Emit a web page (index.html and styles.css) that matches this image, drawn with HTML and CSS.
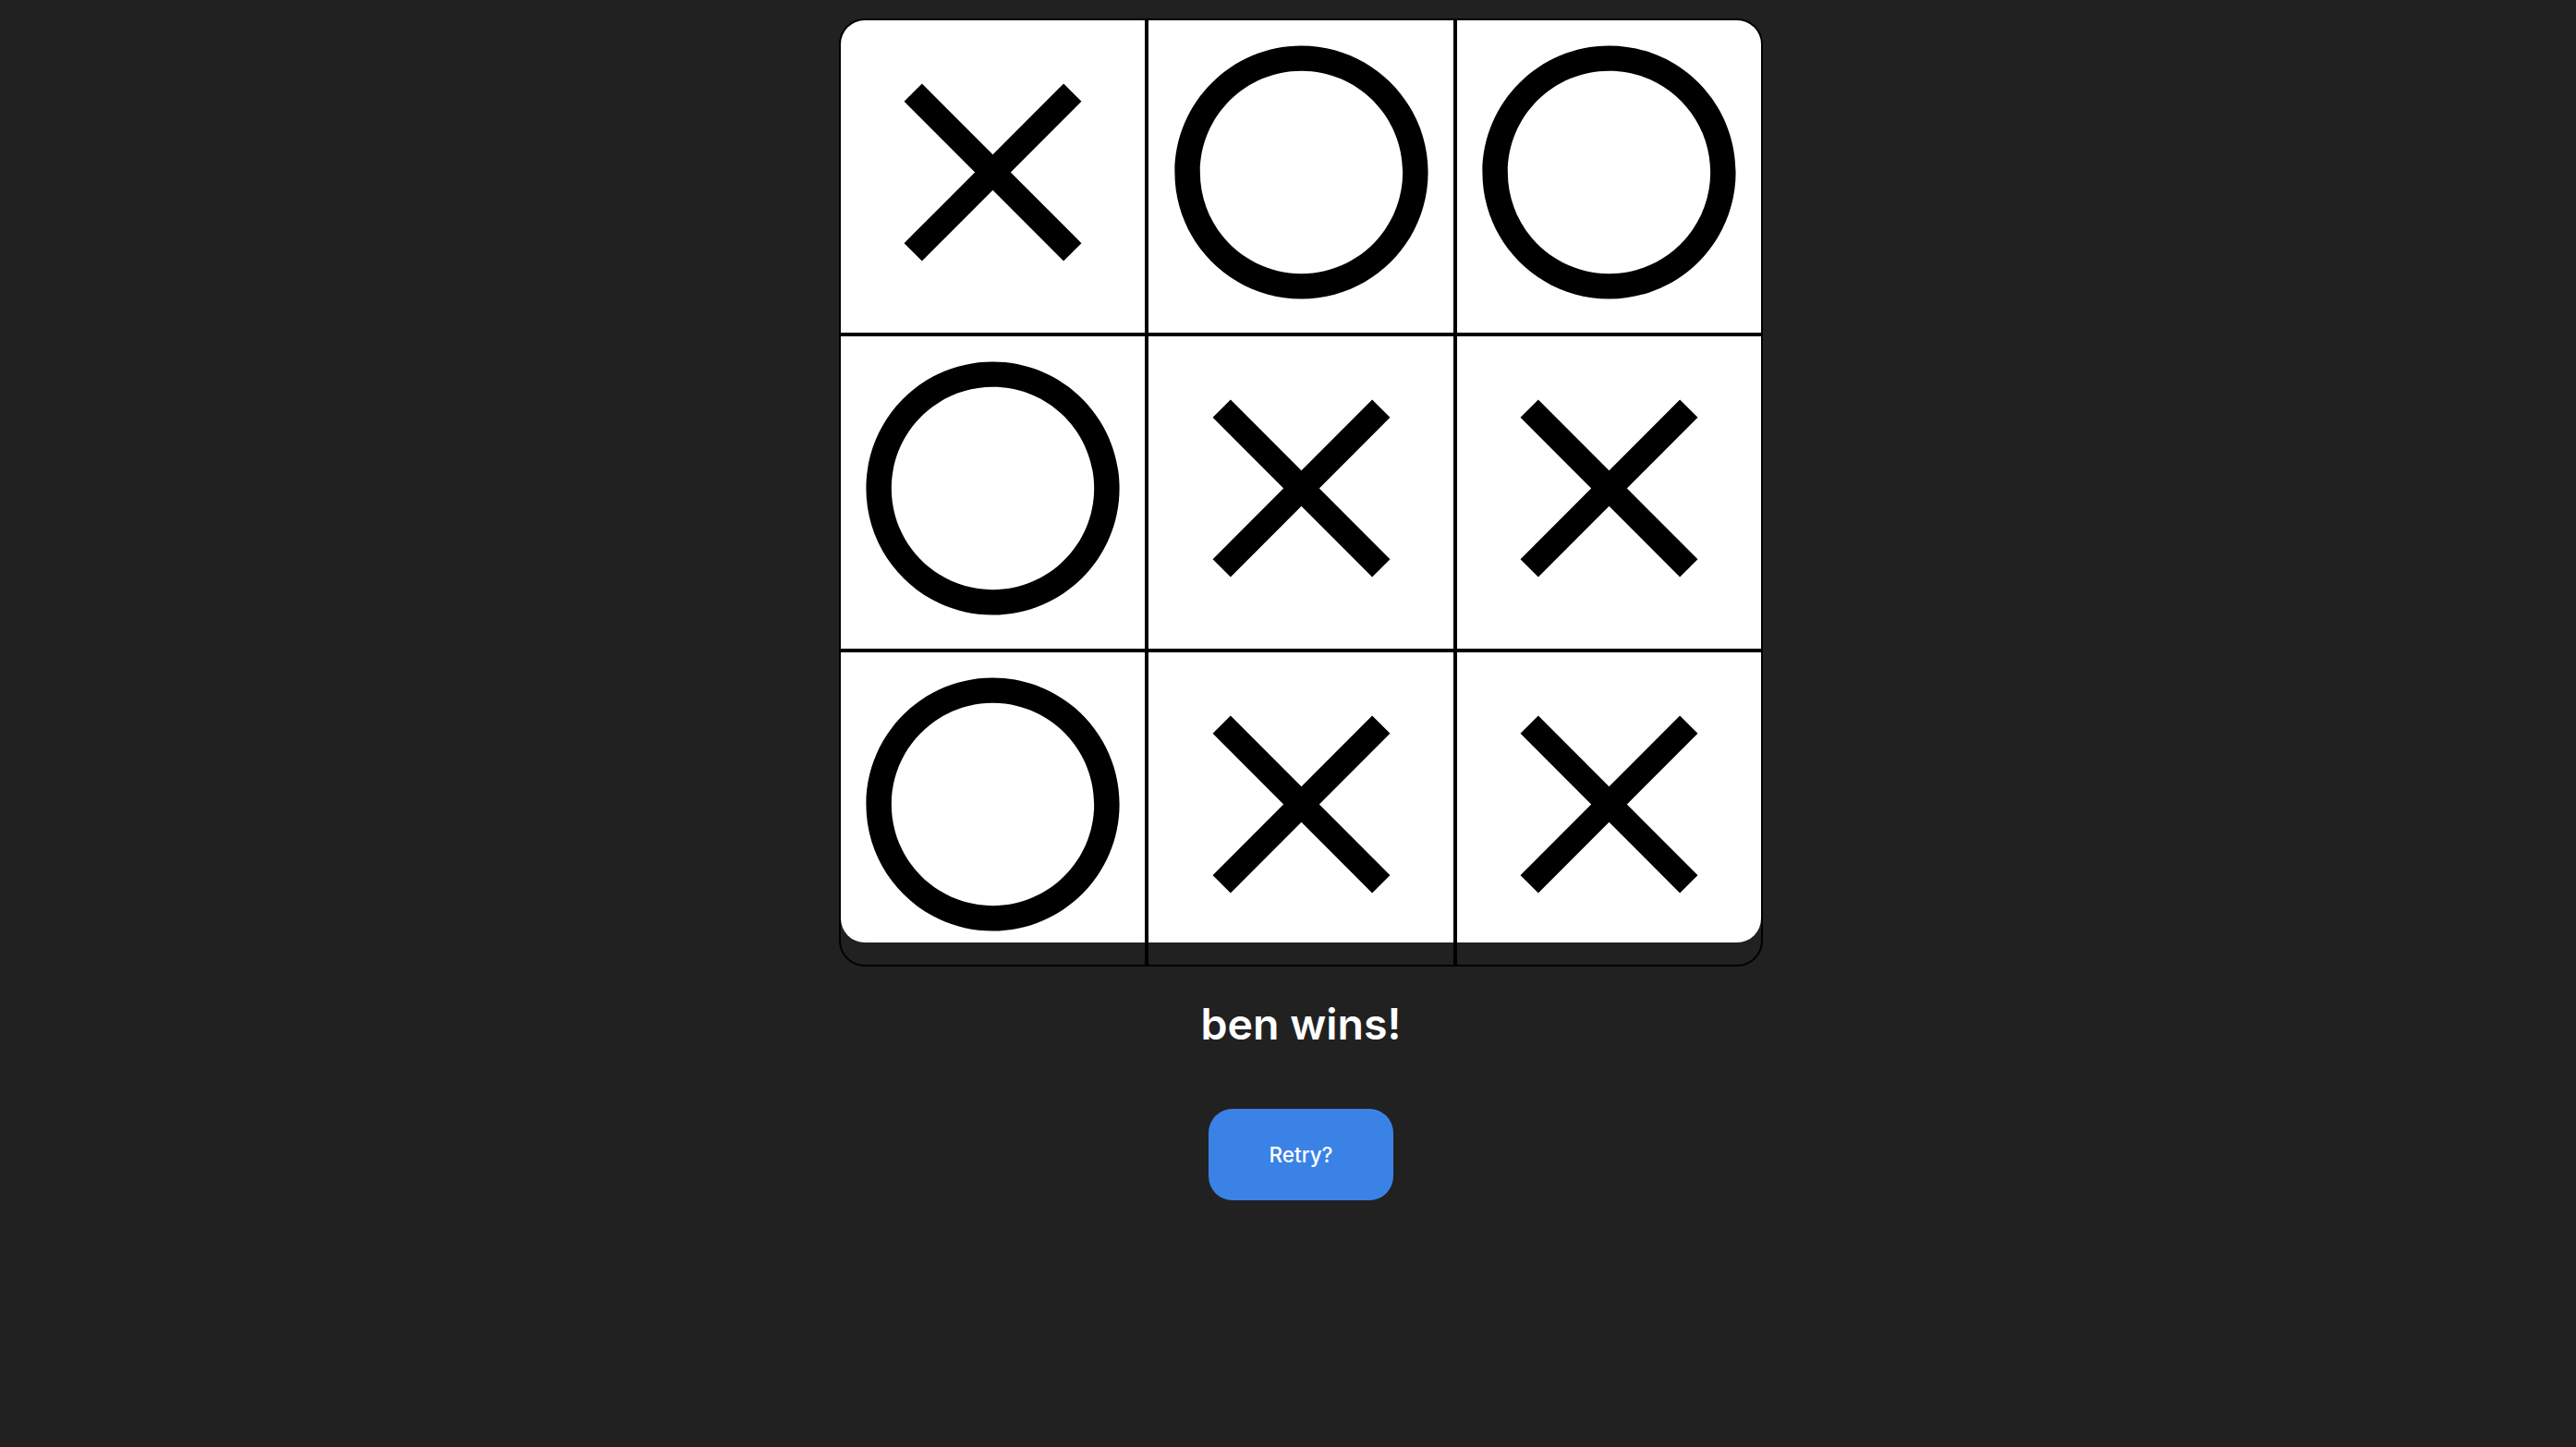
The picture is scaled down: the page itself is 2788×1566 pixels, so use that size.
FILE: index.html
```html
<!DOCTYPE html>
<html lang="en">
<head>
<meta charset="utf-8">
<title>Tic Tac Toe</title>
<link rel="stylesheet" href="styles.css">
</head>
<body>
<main class="page">
  <div class="board">
    <div class="cell c1 r1"><svg class="mark" viewBox="0 0 24 24"><path d="M19 6.41L17.59 5 12 10.59 6.41 5 5 6.41 10.59 12 5 17.59 6.41 19 12 13.41 17.59 19 19 17.59 13.41 12z"/></svg></div>
    <div class="cell c2 r1"><svg class="mark" viewBox="0 0 24 24"><path d="M12 2C6.48 2 2 6.48 2 12s4.48 10 10 10 10-4.48 10-10S17.52 2 12 2zm0 18c-4.42 0-8-3.58-8-8s3.58-8 8-8 8 3.58 8 8-3.58 8-8 8z"/></svg></div>
    <div class="cell c3 r1"><svg class="mark" viewBox="0 0 24 24"><path d="M12 2C6.48 2 2 6.48 2 12s4.48 10 10 10 10-4.48 10-10S17.52 2 12 2zm0 18c-4.42 0-8-3.58-8-8s3.58-8 8-8 8 3.58 8 8-3.58 8-8 8z"/></svg></div>
    <div class="cell c1 r2"><svg class="mark" viewBox="0 0 24 24"><path d="M12 2C6.48 2 2 6.48 2 12s4.48 10 10 10 10-4.48 10-10S17.52 2 12 2zm0 18c-4.42 0-8-3.58-8-8s3.58-8 8-8 8 3.58 8 8-3.58 8-8 8z"/></svg></div>
    <div class="cell c2 r2"><svg class="mark" viewBox="0 0 24 24"><path d="M19 6.41L17.59 5 12 10.59 6.41 5 5 6.41 10.59 12 5 17.59 6.41 19 12 13.41 17.59 19 19 17.59 13.41 12z"/></svg></div>
    <div class="cell c3 r2"><svg class="mark" viewBox="0 0 24 24"><path d="M19 6.41L17.59 5 12 10.59 6.41 5 5 6.41 10.59 12 5 17.59 6.41 19 12 13.41 17.59 19 19 17.59 13.41 12z"/></svg></div>
    <div class="cell c1 r3"><svg class="mark" viewBox="0 0 24 24"><path d="M12 2C6.48 2 2 6.48 2 12s4.48 10 10 10 10-4.48 10-10S17.52 2 12 2zm0 18c-4.42 0-8-3.58-8-8s3.58-8 8-8 8 3.58 8 8-3.58 8-8 8z"/></svg></div>
    <div class="cell c2 r3"><svg class="mark" viewBox="0 0 24 24"><path d="M19 6.41L17.59 5 12 10.59 6.41 5 5 6.41 10.59 12 5 17.59 6.41 19 12 13.41 17.59 19 19 17.59 13.41 12z"/></svg></div>
    <div class="cell c3 r3"><svg class="mark" viewBox="0 0 24 24"><path d="M19 6.41L17.59 5 12 10.59 6.41 5 5 6.41 10.59 12 5 17.59 6.41 19 12 13.41 17.59 19 19 17.59 13.41 12z"/></svg></div>
  </div>
  <h1 class="result">ben wins!</h1>
  <button class="retry" type="button">Retry?</button>
</main>
</body>
</html>
```

FILE: styles.css
```css
html, body {
  margin: 0;
  padding: 0;
  background: #212121;
}

body {
  font-family: Inter, "Liberation Sans", sans-serif;
  min-height: 1566px;
}

.page {
  display: flex;
  flex-direction: column;
  align-items: center;
  padding: 20px 0 0 28px;
}

.board {
  position: relative;
  isolation: isolate;
  box-sizing: border-box;
  width: 1000px;
  height: 1026px;
  border: 2px solid #000;
  border-radius: 28px;
  display: grid;
  grid-template-columns: 333px 334px 329px;
  grid-template-rows: 342px 342px 338px;
}

.board::before {
  content: "";
  position: absolute;
  left: 0;
  top: 0;
  right: 0;
  bottom: 24px;
  background: #fff;
  border-radius: 26px;
  z-index: -1;
}

.cell {
  box-sizing: border-box;
  display: flex;
  justify-content: center;
  align-items: flex-start;
}

.c1, .c2 {
  border-right: 4px solid #000;
}

.r1, .r2 {
  border-bottom: 4px solid #000;
}

.mark {
  display: block;
  width: 329px;
  height: 329px;
  fill: #000;
  flex: none;
}

.result {
  margin: 34px 0 0;
  font-family: Inter, "Liberation Sans", sans-serif;
  font-size: 46.5px;
  line-height: 56px;
  font-weight: 600;
  color: #fff;
}

.retry {
  margin-top: 64px;
  width: 200px;
  height: 99px;
  border: none;
  border-radius: 26px;
  background: #3b82e6;
  color: #fff;
  font-family: Inter, "Liberation Sans", sans-serif;
  font-size: 22.5px;
  font-weight: 500;
  padding: 0;
  cursor: pointer;
}
```
